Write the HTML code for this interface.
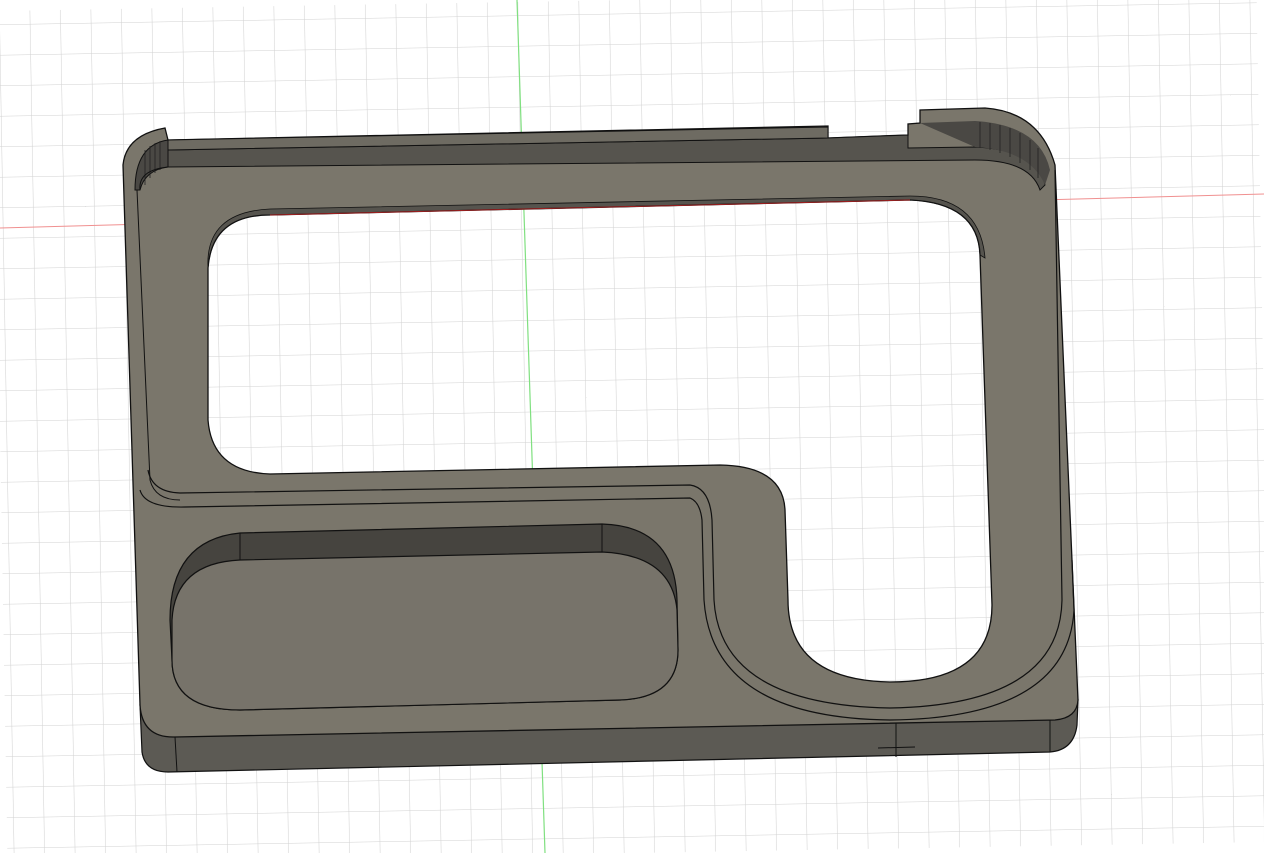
<!DOCTYPE html>
<html><head><style>
html,body{margin:0;padding:0;background:#fff;width:1264px;height:853px;overflow:hidden}
svg{display:block}
</style></head><body>
<svg width="1264" height="853" viewBox="0 0 1264 853" xmlns="http://www.w3.org/2000/svg">
<defs>
<pattern id="g" x="7" y="14" width="30.5" height="30.5" patternUnits="userSpaceOnUse">
<path d="M30.5 0V30.5M0 30.5H30.5" stroke="#d2d2d2" stroke-width="1.1" fill="none"/>
</pattern>
</defs>
<rect width="1264" height="853" fill="#fff"/>
<rect width="1264" height="853" fill="url(#g)" transform="rotate(-1 632 426)"/>
<line x1="0" y1="228" x2="1264" y2="194" stroke="#f09090" stroke-width="1"/>
<line x1="517" y1="0" x2="545" y2="853" stroke="#80e080" stroke-width="1.2"/>

<!-- front side face -->
<path d="M140,705 L142,752 Q145,772 168,772 L1050,752 Q1074,750 1077,725 L1078,700 Z" fill="#5c5a54" stroke="#111" stroke-width="1.2"/>
<line x1="175" y1="737" x2="177" y2="772" stroke="#111"/>
<line x1="1050" y1="720" x2="1050" y2="752" stroke="#111"/>
<line x1="896" y1="722" x2="896" y2="757" stroke="#111"/>
<line x1="878" y1="748" x2="915" y2="747" stroke="#111"/>

<!-- top face -->
<path d="M123,165 Q126,135 165,128 L168,140 L828,126 L828,138 L908,135 L908,124 L920,123 L920,110 L985,108 Q1040,112 1055,165 L1078,700 Q1077,718 1055,720 L175,737 Q142,738 140,705 Z" fill="#7a766b" stroke="#111" stroke-width="1.3"/>

<!-- top dark wall band -->
<path d="M168,150 L828,138 L908,135 L908,148 L975,147 Q1040,150 1045,185 L1040,190 Q1030,160 975,160 L168,167 Z" fill="#56544e" stroke="#111" stroke-width="1"/>
<path d="M920,123 L975,121 Q1040,125 1050,170 L1045,185 Q1030,150 975,147 Z" fill="#4a4844"/>
<path d="M168,140 L828,127 L828,138 L168,150 Z" fill="#6e6b62" stroke="#111" stroke-width="1"/>
<!-- left corner wall -->
<path d="M135,190 Q135,145 168,140 L168,167 Q145,170 140,190 Z" fill="#4a4844" stroke="#111" stroke-width="1"/>
<g stroke="#222" stroke-width="0.8">
<line x1="145" y1="150" x2="145" y2="185"/><line x1="150" y1="146" x2="150" y2="178"/><line x1="155" y1="143" x2="155" y2="173"/><line x1="160" y1="141" x2="160" y2="170"/>
<line x1="980" y1="122" x2="980" y2="148"/><line x1="990" y1="123" x2="990" y2="150"/><line x1="1000" y1="125" x2="1000" y2="153"/><line x1="1010" y1="128" x2="1010" y2="157"/><line x1="1020" y1="133" x2="1020" y2="163"/><line x1="1030" y1="140" x2="1030" y2="170"/><line x1="1038" y1="148" x2="1038" y2="178"/>
</g>
<path d="M140,190 Q138,170 168,167" fill="none" stroke="#111"/>
<path d="M137,190 L150,480 Q155,500 180,500" fill="none" stroke="#111"/>

<!-- grooves -->
<path d="M148,470 Q152,492 180,493 L690,485 Q710,488 712,520 L714,600 Q720,705 890,708 Q1060,705 1062,600 L1055,170" fill="none" stroke="#111" stroke-width="1.2"/>
<path d="M140,490 Q145,508 185,507 L690,498 Q700,502 702,520 L704,600 Q712,718 890,720 Q1068,718 1074,610 L1072,560" fill="none" stroke="#111" stroke-width="1.2"/>

<!-- big hole -->
<clipPath id="hc"><path d="M208,268 Q212,215 270,215 L910,200 Q978,203 980,255 L992,605 Q992,682 890,682 Q788,680 788,600 L785,510 Q783,466 720,465 L270,474 Q212,472 208,420 Z"/></clipPath>
<path d="M208,268 Q212,215 270,215 L910,200 Q978,203 980,255 L992,605 Q992,682 890,682 Q788,680 788,600 L785,510 Q783,466 720,465 L270,474 Q212,472 208,420 Z" fill="#fff"/>
<g clip-path="url(#hc)">
<rect width="1264" height="853" fill="url(#g)" transform="rotate(-1 632 426)"/>
<line x1="517" y1="0" x2="545" y2="853" stroke="#80e080" stroke-width="1.2"/>
</g>
<path d="M208,268 Q212,215 270,215 L910,200 Q978,203 980,255 L985,258 Q980,196 910,196 L270,209 Q205,212 208,268 Z" fill="#56544e" stroke="#111" stroke-width="0.8"/>
<path d="M208,268 Q212,215 270,215 L910,200 Q978,203 980,255 L992,605 Q992,682 890,682 Q788,680 788,600 L785,510 Q783,466 720,465 L270,474 Q212,472 208,420 Z" fill="none" stroke="#111" stroke-width="1.3"/>
<line x1="270" y1="215" x2="910" y2="200" stroke="#a02020" stroke-width="1"/>

<!-- pocket -->
<path d="M170,620 Q170,540 240,533 L602,524 Q675,526 677,600 L678,650 Q678,698 620,700 L240,710 Q172,710 172,660 Z" fill="#46443f" stroke="#111" stroke-width="1.2"/>
<path d="M172,620 Q175,563 240,560 L602,552 Q672,555 677,610 L678,650 Q678,698 620,700 L240,710 Q172,710 172,660 Z" fill="#77736a" stroke="#111" stroke-width="1.2"/>
<line x1="240" y1="533" x2="240" y2="560" stroke="#111"/>
<line x1="602" y1="524" x2="602" y2="552" stroke="#111"/>
</svg>
</body></html>
